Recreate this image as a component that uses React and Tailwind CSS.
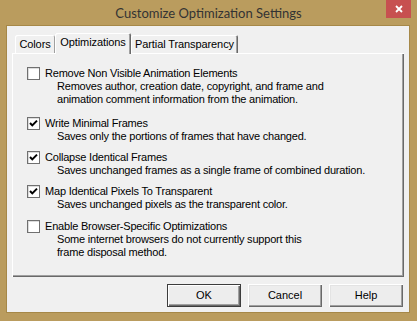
const options = [
  {
    label: 'Remove Non Visible Animation Elements',
    lines: [
      'Removes author, creation date, copyright, and frame and',
      'animation comment information from the animation.',
    ],
    checked: false,
    gap: 'mt-0',
  },
  {
    label: 'Write Minimal Frames',
    lines: ['Saves only the portions of frames that have changed.'],
    checked: true,
    gap: 'mt-[10px]',
  },
  {
    label: 'Collapse Identical Frames',
    lines: ['Saves unchanged frames as a single frame of combined duration.'],
    checked: true,
    gap: 'mt-[7px]',
  },
  {
    label: 'Map Identical Pixels To Transparent',
    lines: ['Saves unchanged pixels as the transparent color.'],
    checked: true,
    gap: 'mt-[7px]',
  },
  {
    label: 'Enable Browser-Specific Optimizations',
    lines: ['Some internet browsers do not currently support this', 'frame disposal method.'],
    checked: false,
    gap: 'mt-[8px]',
  },
];

function CheckBox({ checked }) {
  return (
    <span className="mt-[1px] flex h-[13px] w-[13px] shrink-0 items-center justify-center border border-[#707070] bg-white shadow-[inset_1px_1px_#dcdcdc]">
      {checked && (
        <svg width="11" height="11" viewBox="0 0 11 11">
          <path d="M2 5 L4.3 7.4 L9 2.6" fill="none" stroke="#000" strokeWidth="2" />
        </svg>
      )}
    </span>
  );
}

function Button({ children, isDefault }) {
  return (
    <button
      className={
        isDefault
          ? 'h-[23px] w-[74px] border border-[#3c3c3c] bg-[#ededed] text-[11px] text-black shadow-[inset_1px_1px_#fff,inset_-1px_-1px_#696969,inset_-2px_-2px_#a0a0a0]'
          : 'h-[23px] w-[74px] bg-[#ededed] text-[11px] text-black shadow-[inset_1px_1px_#fff,inset_-1px_-1px_#696969,inset_-2px_-2px_#a0a0a0,inset_2px_2px_#e3e3e3]'
      }
    >
      {children}
    </button>
  );
}

export default function App() {
  return (
    <div className="flex h-[321px] w-[417px] flex-col bg-[#ba9c5e] font-['Liberation_Sans',Arial,sans-serif] text-black">
      <div className="grid h-[25px] grid-cols-[1fr_auto_1fr]">
        <div />
        <div className="pt-[3px] font-['Lato','Noto_Sans',sans-serif] text-[13px] leading-[20px] text-[#333]">
          Customize Optimization Settings
        </div>
        <div className="flex justify-end pr-[6px]">
          <div className="flex h-[18px] w-[25px] items-center justify-center bg-[#c75050]">
            <svg width="8" height="8" viewBox="0 0 8 8">
              <path d="M1 1 L7 7 M7 1 L1 7" stroke="#fff" strokeWidth="1.8" />
            </svg>
          </div>
        </div>
      </div>

      <div className="ml-[6px] mr-[7px] flex h-[288px] flex-col border border-[#a68848] bg-[#f0f0f0] px-[5px] pt-[7px]">
        <div className="flex h-[20px] items-end pl-[3px] text-[11px] tracking-[-0.1px]">
          <div className="flex h-[18px] w-[40px] items-center justify-center rounded-t-[2px] shadow-[inset_1px_1px_#fff,inset_-1px_0_#a0a0a0]">
            Colors
          </div>
          <div className="relative z-10 -mb-[1px] flex h-[21px] w-[76px] items-center justify-center rounded-t-[2px] bg-[#f0f0f0] pb-[2px] shadow-[inset_1px_1px_#fff,inset_-1px_0_#696969,inset_-2px_0_#a0a0a0]">
            Optimizations
          </div>
          <div className="flex h-[18px] w-[107px] items-center justify-center rounded-t-[2px] shadow-[inset_1px_1px_#fff,inset_-1px_0_#696969,inset_-2px_0_#a0a0a0]">
            Partial Transparency
          </div>
        </div>

        <div className="h-[224px] pl-[15px] pt-[13px] shadow-[inset_1px_1px_#fff,inset_-1px_-1px_#696969,inset_-2px_-2px_#a0a0a0]">
          {options.map((option) => (
            <div className={`flex gap-[5px] ${option.gap}`} key={option.label}>
              <CheckBox checked={option.checked} />
              <div className="pt-[1px] text-[11px] leading-[13px] tracking-[-0.2px]">
                <div>{option.label}</div>
                {option.lines.map((line) => (
                  <div className="pl-[12px]" key={line}>
                    {line}
                  </div>
                ))}
              </div>
            </div>
          ))}
        </div>

        <div className="mt-[7px] flex justify-end gap-[7px] pr-[1px]">
          <Button isDefault>OK</Button>
          <Button>Cancel</Button>
          <Button>Help</Button>
        </div>
      </div>
    </div>
  );
}
